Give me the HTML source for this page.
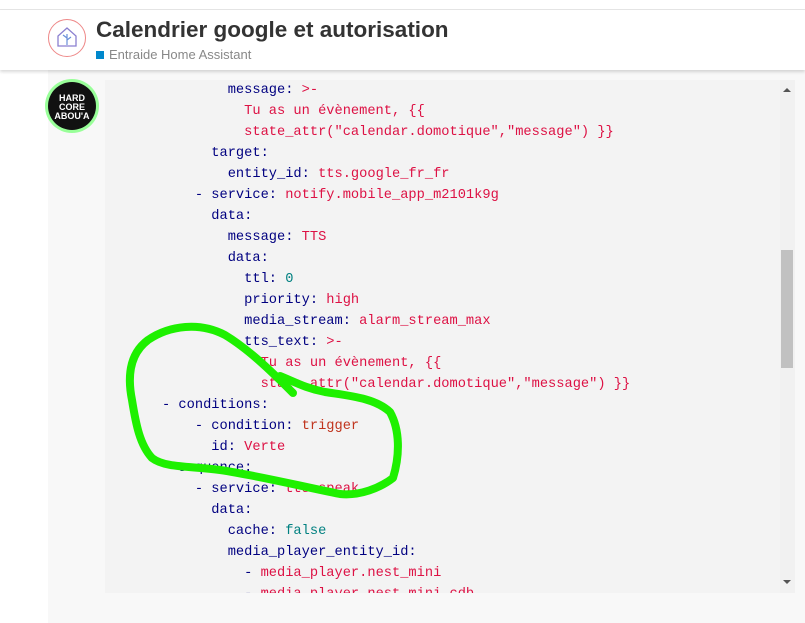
<!DOCTYPE html>
<html><head><meta charset="utf-8"><style>
body{margin:0;width:805px;height:623px;overflow:hidden;background:#fff;font-family:"Liberation Sans",sans-serif;position:relative}
.top{position:absolute;left:0;top:9px;width:805px;height:1px;background:#e6e6e6}
.hdr{position:absolute;left:0;top:10px;width:805px;height:60px;background:#fff;box-shadow:0 2px 3px rgba(0,0,0,.15);z-index:2}
.title{position:absolute;left:96px;top:7px;font-size:22.5px;font-weight:bold;color:#333}
.cat{position:absolute;left:96px;top:37px;font-size:13px;color:#888}
.cat i{display:inline-block;width:8px;height:8px;background:#0088cc;margin-right:5px}
.logo{position:absolute;left:48px;top:9px;width:38px;height:38px;border-radius:50%;border:1px solid #e88;box-sizing:border-box}
.side{position:absolute;left:48px;top:70px;width:757px;height:553px;background:#f8f8f8}
.av{position:absolute;left:48px;top:82px;width:48px;height:48px;border-radius:50%;background:#111;box-shadow:0 0 0 3px #9f9;color:#fff;font:bold 9px "Liberation Sans";text-align:center;line-height:9px;padding-top:12px;box-sizing:border-box}
.code{position:absolute;left:105px;top:80px;width:690px;height:513px;background:#f3f3f3;overflow:hidden}
pre{margin:0;position:absolute;left:57px;top:0px;font:13.7px/21px "Liberation Mono",monospace;color:#000080}
.s{color:#dd1144}.n{color:#008080}.t{color:#c0341d}
.sb{position:absolute;left:780px;top:80px;width:15px;height:513px;background:#f1f1f1}
.th{position:absolute;left:781px;top:250px;width:12px;height:118px;background:#c1c1c1}
</style></head><body>
<div class="top"></div>
<div class="hdr">
<div class="logo"><svg width="36" height="36" viewBox="0 0 36 36"><path d="M9 26V16L18 8L27 16V26Z" fill="none" stroke="#8a7fd0" stroke-width="1.3"/><path d="M18 25V14M18 18l-4-3M18 20l4-3" stroke="#6a8fd8" stroke-width="1.2" fill="none"/></svg></div>
<div class="title">Calendrier google et autorisation</div>
<div class="cat"><i></i>Entraide Home Assistant</div>
</div>
<div class="side"></div>
<div class="av">HARD<br>CORE<br>ABOU'A</div>
<div class="code"><pre>        message: <span class="s">&gt;-</span>
          <span class="s">Tu as un évènement, {{</span>
          <span class="s">state_attr("calendar.domotique","message") }}</span>
      target:
        entity_id: <span class="s">tts.google_fr_fr</span>
    - service: <span class="s">notify.mobile_app_m2101k9g</span>
      data:
        message: <span class="s">TTS</span>
        data:
          ttl: <span class="n">0</span>
          priority: <span class="s">high</span>
          media_stream: <span class="s">alarm_stream_max</span>
          tts_text: <span class="s">&gt;-</span>
            <span class="s">Tu as un évènement, {{</span>
            <span class="s">state_attr("calendar.domotique","message") }}</span>
- conditions:
    - condition: <span class="t">trigger</span>
      id: <span class="s">Verte</span>
  sequence:
    - service: <span class="s">tts.speak</span>
      data:
        cache: <span class="n">false</span>
        media_player_entity_id:
          - <span class="s">media_player.nest_mini</span>
          - <span class="s">media_player.nest_mini_cdb</span></pre></div>
<div class="sb"></div><div class="th"></div>
<svg style="position:absolute;left:782px;top:85px" width="10" height="504"><path d="M1 7L5 3L9 7Z" fill="#555"/><path d="M1 495L5 499L9 495Z" fill="#555"/></svg>
<svg style="position:absolute;left:0;top:0" width="805" height="623"><path d="M293 393C275 375 250 350 225 335C200 322 170 325 148 340C128 355 128 380 132 400C136 425 140 445 152 458C165 468 190 466 220 470C260 476 300 486 340 494C360 496 380 488 393 478C400 455 400 430 390 412C375 398 350 396 325 392C305 388 295 382 280 376" fill="none" stroke="#1ef000" stroke-width="8" stroke-linecap="round" stroke-linejoin="round"/></svg>
</body></html>
